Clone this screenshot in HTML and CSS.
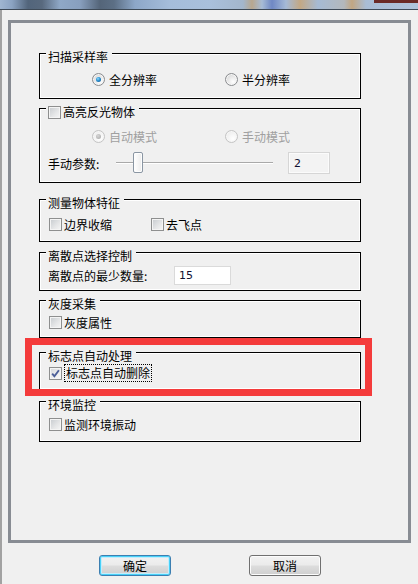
FILE: index.html
```html
<!DOCTYPE html>
<html lang="zh-CN">

<head>
    <meta charset="UTF-8">
    <meta name="viewport" content="width=device-width, initial-scale=1.0">
    <title>扫描设置</title>
    <link rel="stylesheet" href="styles.css">
</head>

<body>
    <!-- Title bar (blurred desktop behind) -->
    <div class="titlebar"></div>

    <div class="window">
        <div class="panel">
            <!-- 扫描采样率 -->
            <div class="group group-scan">
                <div class="group-title">扫描采样率</div>
                <div class="row radios">
                    <label class="radio checked"><span class="dot"></span>全分辨率</label>
                    <label class="radio"><span class="dot"></span>半分辨率</label>
                </div>
            </div>

            <!-- 高亮反光物体 -->
            <div class="group group-shiny">
                <div class="group-title"><span class="check"></span>高亮反光物体</div>
                <div class="row radios disabled">
                    <label class="radio checked"><span class="dot"></span>自动模式</label>
                    <label class="radio"><span class="dot"></span>手动模式</label>
                </div>
                <div class="row slider-row">
                    <span class="slider-label">手动参数:</span>
                    <div class="slider">
                        <div class="track"></div>
                        <div class="thumb"></div>
                    </div>
                    <div class="edit edit-param">2</div>
                </div>
            </div>

            <!-- 测量物体特征 -->
            <div class="group group-feature">
                <div class="group-title">测量物体特征</div>
                <div class="row checks">
                    <label class="checkbox"><span class="check"></span>边界收缩</label>
                    <label class="checkbox"><span class="check"></span>去飞点</label>
                </div>
            </div>

            <!-- 离散点选择控制 -->
            <div class="group group-scatter">
                <div class="group-title">离散点选择控制</div>
                <div class="row field-row">
                    <span class="field-label">离散点的最少数量:</span>
                    <div class="edit edit-count">15</div>
                </div>
            </div>

            <!-- 灰度采集 -->
            <div class="group group-gray">
                <div class="group-title">灰度采集</div>
                <div class="row checks">
                    <label class="checkbox"><span class="check"></span>灰度属性</label>
                </div>
            </div>

            <!-- 标志点自动处理 -->
            <div class="group group-marker">
                <div class="group-title">标志点自动处理</div>
                <div class="row checks">
                    <label class="checkbox">
                        <span class="check checked">
                            <svg viewBox="0 0 11 11" width="11" height="11">
                                <path d="M2.2 5.6 L4.4 8.3 L8.9 2.2" fill="none" stroke="#4b5e98" stroke-width="1.9" />
                            </svg>
                        </span>
                        <span class="focus">标志点自动删除</span>
                    </label>
                </div>
            </div>

            <!-- 环境监控 -->
            <div class="group group-env">
                <div class="group-title">环境监控</div>
                <div class="row checks">
                    <label class="checkbox"><span class="check"></span>监测环境振动</label>
                </div>
            </div>

            <!-- annotation box -->
            <div class="highlight"></div>
        </div>

        <div class="buttons">
            <button class="btn btn-default">确定</button>
            <button class="btn">取消</button>
        </div>
    </div>
</body>

</html>
```

FILE: styles.css
```css
/* General */
* {
    margin: 0;
    padding: 0;
    box-sizing: border-box;
}

html,
body {
    height: 100%;
}

body {
    background: #f0f0f0;
    font-family: "Noto Sans CJK SC", "Noto Sans", sans-serif;
    font-size: 12px;
    color: #000;
    overflow: hidden;
}

label {
    display: flex;
    align-items: center;
}

/* Title bar */
.titlebar {
    height: 10px;
    border-bottom: 1px solid #3e4a57;
    background:
        linear-gradient(#6b2a26, #6b2a26) right top / 44px 3px no-repeat,
        linear-gradient(90deg, #a0b6d1 0px, #8ba3c2 12px, #52657b 28px, #58697e 42px,
            #8fa8c7 60px, #889fbe 80px, #546579 100px, #5c6f85 114px, #8da7c8 135px,
            #a5bdda 170px, #a9c0dc 210px, #a3b6cc 243px, #b8a78e 252px, #a7bcd6 262px,
            #6f88c4 272px, #a5bad6 286px, #c3a884 300px, #a6bbd4 318px, #b3b8bc 344px,
            #c1a682 352px, #a9bdd5 366px, #b0c4dc 418px);
}

/* Window body */
.window {
    height: calc(100% - 10px);
    border-left: 2px solid #a2a2a2;
    padding: 10px 0 0 6px;
}

.panel {
    position: relative;
    width: 403px;
    height: 523px;
    border: 3px solid #888c93;
    padding-left: 28px;
}

/* Group boxes */
.group {
    display: flex;
    flex-direction: column;
    width: 322px;
    border: 1px solid #000;
    box-shadow: inset 1px 1px 0 #fff, inset -1px -1px 0 #fff;
}

.group-title {
    display: flex;
    align-items: center;
    gap: 2px;
    align-self: flex-start;
    height: 14px;
    line-height: 14px;
    margin: -4px 0 0 6px;
    padding: 0 4px 0 2px;
    background: #f0f0f0;
}

.row {
    display: flex;
    align-items: center;
    height: 16px;
}

.group-scan { margin-top: 30px; height: 46px; }
.group-shiny { margin-top: 9px; height: 75px; }
.group-feature { margin-top: 16px; height: 43px; }
.group-scatter { margin-top: 10px; height: 39px; }
.group-gray { margin-top: 9px; height: 38px; }
.group-marker { margin-top: 14px; height: 38px; }
.group-env { margin-top: 11px; height: 41px; }

.group-scan .row { margin-top: 7px; }
.group-shiny .radios { margin-top: 9px; }
.group-feature .row { margin-top: 6px; }
.group-gray .row { margin-top: 3px; }
.group-marker .row { margin-top: 2px; }
.group-env .row { margin-top: 4px; }

/* Radio buttons */
.radios {
    padding-left: 52px;
}

.radio {
    gap: 4px;
    min-width: 133px;
}

.radio .dot {
    position: relative;
    width: 13px;
    height: 13px;
    border-radius: 50%;
    border: 1px solid #8a8c8f;
    background: radial-gradient(circle at 65% 70%, #ffffff 0%, #dcdcdc 70%, #c8c8c8 100%);
    box-shadow: inset 0 0 0 1px #f6f6f6;
}

.radio.checked .dot::after {
    content: "";
    position: absolute;
    left: 3px;
    top: 3px;
    width: 5px;
    height: 5px;
    border-radius: 50%;
    background: radial-gradient(circle at 40% 35%, #8fdcff 0%, #2a8fd0 45%, #0c4f86 100%);
}

.disabled {
    color: #a0a0a0;
}

.disabled .radio .dot {
    border-color: #c4c4c4;
    background: radial-gradient(circle at 65% 70%, #ffffff 0%, #ececec 80%);
}

.disabled .radio.checked .dot::after {
    background: radial-gradient(circle at 40% 35%, #d6d6d6 0%, #a6a6a6 100%);
}

/* Check boxes */
.checks {
    padding-left: 9px;
}

.checkbox {
    gap: 2px;
    min-width: 102px;
}

.check {
    display: flex;
    align-items: center;
    justify-content: center;
    width: 13px;
    height: 13px;
    border: 1px solid #8e8f8f;
    background: linear-gradient(135deg, #c6cace 0%, #e6e7e8 60%, #f6f6f6 100%);
    box-shadow: inset 0 0 0 1px #f4f4f4;
}

.check.checked {
    background: linear-gradient(135deg, #d4d7db 0%, #eeeeee 60%, #f9f9f9 100%);
}

.focus {
    height: 18px;
    line-height: 16px;
    padding: 0 1px;
    border: 1px dotted #000;
}

/* Slider row */
.slider-row {
    height: 22px;
    margin-top: 8px;
    padding-left: 8px;
}

.slider-label {
    width: 68px;
}

.slider {
    position: relative;
    width: 157px;
    height: 22px;
}

.track {
    position: absolute;
    left: 0;
    right: 0;
    top: 10px;
    height: 2px;
    border-top: 1px solid #a9a9a9;
    border-bottom: 1px solid #ffffff;
}

.thumb {
    position: absolute;
    left: 17px;
    top: 0;
    width: 10px;
    height: 21px;
    border: 1px solid #8a96a3;
    border-radius: 2px;
    background: linear-gradient(90deg, #ffffff, #ececec);
    box-shadow: inset 0 0 0 1px #fdfdfd;
}

.edit {
    display: flex;
    align-items: center;
    font-family: "DejaVu Sans", "Noto Sans", sans-serif;
    font-size: 11px;
    color: #101030;
}

.edit-param {
    width: 42px;
    height: 22px;
    margin-left: 15px;
    padding-left: 5px;
    border: 1px solid #d6d6d6;
    background: #f3f3f3;
    box-shadow: inset 0 0 0 1px #fbfbfb;
}

/* Field row */
.field-row {
    height: 20px;
    margin-top: 2px;
    padding-left: 8px;
}

.field-label {
    width: 126px;
}

.edit-count {
    width: 57px;
    height: 19px;
    padding-left: 4px;
    border: 1px solid #dadada;
    background: #fff;
}

/* Red annotation */
.highlight {
    position: absolute;
    left: 14px;
    top: 315px;
    width: 347px;
    height: 58px;
    border: 7px solid #f43b3b;
}

/* Buttons */
.buttons {
    display: flex;
    gap: 78px;
    margin-top: 12px;
    padding-left: 91px;
}

.btn {
    width: 72px;
    height: 21px;
    font-family: "Noto Sans CJK SC", sans-serif;
    font-size: 12px;
    line-height: 17px;
    color: #000;
    border: 1px solid #707070;
    border-radius: 3px;
    background: linear-gradient(#f2f2f2 0%, #ebebeb 48%, #dddddd 52%, #cfcfcf 100%);
    box-shadow: inset 0 0 0 1px #fcfcfc;
}

.btn-default {
    border-color: #3c7fb1;
    box-shadow: inset 0 0 0 1px #48d1f8, inset 0 0 0 2px #c4ecfb;
}
```
